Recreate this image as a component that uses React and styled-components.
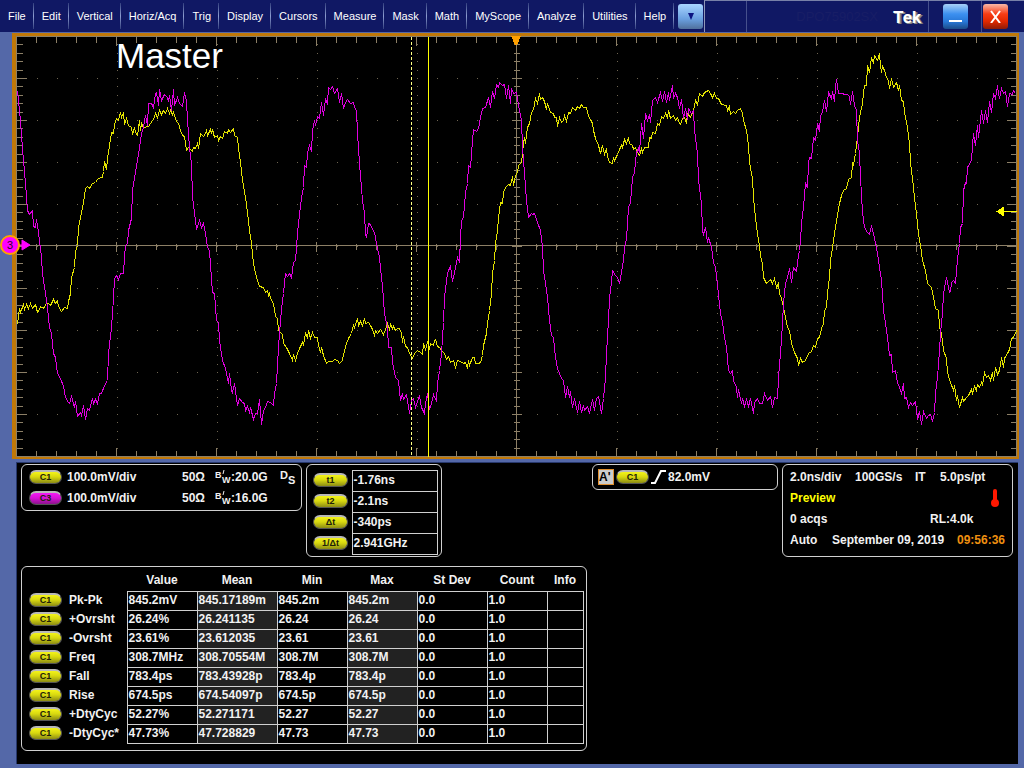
import React from 'react'
import styled, { createGlobalStyle } from 'styled-components';

const GlobalStyle = createGlobalStyle`
  * {
    box-sizing: border-box;
  }
  body {
    margin: 0;
    background: #5468a8;
    color: #f2f2f2;
    font-family: "Liberation Sans", Arial, sans-serif;
    font-size: 12px;
  }
  button {
    font-family: inherit;
    border: 0;
    padding: 0;
    cursor: pointer;
  }
`;

const Page = styled.div`
  display: flex;
  flex-direction: column;
  min-height: 100vh;
`;

const TopBar = styled.header`
  display: flex;
  height: 32px;
  background: #101864;
`;

const Menu = styled.nav`
  display: flex;
  align-items: center;
`;

const MenuItem = styled.button`
  height: 26px;
  padding: 0 7px 0 8px;
  background: none;
  border-right: 1px solid;
  border-image: linear-gradient(#2c3878, #8c9cd0, #2c3878) 1;
  color: #ffffff;
  font-size: 11px;
`;

const BarButton = styled.button`
  display: flex;
  align-items: center;
  justify-content: center;
  width: 25px;
  height: 25px;
  border-radius: 3px;
  background: ${({ $fill }) => $fill};
`;

const MoreButton = styled(BarButton)`
  margin-left: 4px;
`;

const TitleArea = styled.div`
  flex: 1;
  display: flex;
  margin-left: 1px;
  border-top: 1px solid #7880a8;
  border-left: 1px solid #9098b8;
`;

const TitleCell = styled.div`
  display: flex;
  align-items: center;
  justify-content: ${({ $end }) => ($end ? 'flex-end' : 'center')};
  gap: 15px;
  flex: ${({ $grow, $width }) => ($grow ? '1' : `0 0 ${$width}px`)};
  padding-right: ${({ $end }) => ($end ? 7 : 0)}px;
  border-right: ${({ $last }) => ($last ? 0 : 1)}px solid #46508c;
`;

const ModelName = styled.span`
  color: #181e66;
  font-size: 13px;
`;

const Brand = styled.span`
  color: #ffffff;
  font-family: Roboto, sans-serif;
  font-size: 17px;
  font-weight: bold;
  text-shadow: 1px 1px 0 #8c8c8c, 2px 1px 0 #707070;
`;

const Scope = styled.main`
  position: relative;
  margin: 1px 5px 0 12px;
  border: solid #c07808;
  border-width: 3px 2px 2px 4px;
  background: #000000;
`;

const Plot = styled.svg`
  display: block;
  width: 100%;
  height: 421px;
`;

const PlotLabel = styled.div`
  position: absolute;
  left: 100px;
  top: -3px;
  color: #ffffff;
  font-size: 35px;
  line-height: 46px;
`;

const ChannelMarker = styled.svg`
  position: absolute;
  left: -17px;
  top: 198px;
  width: 32px;
  height: 22px;
`;

const Bottom = styled.section`
  flex: 1;
  margin: 3px 6px 4px 16px;
  padding: 1px 5px 0 4px;
  border: solid #28386c;
  border-width: 1px 0 0 1px;
  background: #000000;
`;

const Readouts = styled.div`
  display: flex;
  align-items: flex-start;
  gap: 4px;
`;

const Card = styled.div`
  border: 1px solid #d0d0d0;
  border-radius: 6px;
  font-weight: bold;
`;

const ChannelCard = styled(Card)`
  flex: 0 0 281px;
  padding: 1px 4px 2px 7px;
`;

const ChannelRow = styled.div`
  display: grid;
  grid-template-columns: 38px 115px 33px 65px 1fr;
  align-items: center;
  height: 21px;
`;

const Bandwidth = styled.span`
  display: flex;
  align-items: center;
`;

const CursorCard = styled(Card)`
  flex: 0 0 136px;
  padding: 5px 3px 1px 6px;
`;

const TriggerCard = styled(Card)`
  display: flex;
  align-items: center;
  flex: 0 0 186px;
  height: 26px;
  margin-left: auto;
  padding: 0 5px;
  gap: 2px;
`;

const TriggerBadge = styled.span`
  width: 16px;
  height: 16px;
  border: 1px solid #e09030;
  background: #cccccc;
  color: #000000;
  line-height: 14px;
`;

const TimeCard = styled(Card)`
  flex: 0 0 231px;
  padding: 1px 0 6px 7px;
`;

const TimeRow = styled.div`
  display: grid;
  grid-template-columns: ${({ $columns }) => $columns};
  align-items: center;
  height: 21px;
  white-space: nowrap;
`;

const Preview = styled.span`
  color: #ffff00;
`;

const Clock = styled.span`
  color: #f09010;
`;

const pillColors = {
  yellow: 'linear-gradient(#f4f418, #d8d810 45%, #8c8c14)',
  magenta: 'linear-gradient(#f418f4, #d810d8 45%, #8c148c)',
};

const Pill = styled.button`
  display: block;
  width: ${({ $wide }) => ($wide ? 35 : 33)}px;
  height: 14px;
  border: 1px solid #555555;
  border-top: 2px solid #b8b8b8;
  border-radius: 7px;
  background: ${({ $color = 'yellow' }) => pillColors[$color]};
  color: #202008;
  font-size: 9px;
  font-weight: bold;
  line-height: 11px;
`;

const CursorTable = styled.table`
  width: 100%;
  border-collapse: collapse;
  table-layout: fixed;

  th {
    width: 39px;
    height: 21px;
    padding: 0 0 2px;
  }
  td {
    padding: 0 0 2px 1px;
    border: 1px solid #d0d0d0;
  }
`;

const MeasureCard = styled(Card)`
  width: 566px;
  margin-top: 9px;
  padding: 0 3px 6px 7px;
`;

const MeasureTable = styled.table`
  width: 100%;
  border-collapse: collapse;
  table-layout: fixed;

  th,
  td {
    height: 19px;
    padding: 0 0 2px;
    text-align: left;
    white-space: nowrap;
  }
  thead th {
    height: 24px;
    padding: 3px 0 0;
    text-align: center;
  }
`;

const Cell = styled.td`
  && {
    padding-left: 1px;
  }
  border: 1px solid #d0d0d0;
  background: ${({ $shaded }) => ($shaded ? '#222222' : 'transparent')};
`;

const menuItems = [
  'File', 'Edit', 'Vertical', 'Horiz/Acq', 'Trig', 'Display', 'Cursors',
  'Measure', 'Mask', 'Math', 'MyScope', 'Analyze', 'Utilities', 'Help',
];

const channels = [
  { name: 'C1', color: 'yellow', scale: '100.0mV/div', bandwidth: '20.0G', sampled: true },
  { name: 'C3', color: 'magenta', scale: '100.0mV/div', bandwidth: '16.0G', sampled: false },
];

const cursors = [
  ['t1', '-1.76ns'],
  ['t2', '-2.1ns'],
  ['Δt', '-340ps'],
  ['1/Δt', '2.941GHz'],
];

const columns = ['Value', 'Mean', 'Min', 'Max', 'St Dev', 'Count', 'Info'];
const columnWidths = [40, 58, 70, 80, 70, 70, 70, 60, 36];

const measurements = [
  ['Pk-Pk', '845.2mV', '845.17189m', '845.2m', '845.2m', '0.0', '1.0', ''],
  ['+Ovrsht', '26.24%', '26.241135', '26.24', '26.24', '0.0', '1.0', ''],
  ['-Ovrsht', '23.61%', '23.612035', '23.61', '23.61', '0.0', '1.0', ''],
  ['Freq', '308.7MHz', '308.70554M', '308.7M', '308.7M', '0.0', '1.0', ''],
  ['Fall', '783.4ps', '783.43928p', '783.4p', '783.4p', '0.0', '1.0', ''],
  ['Rise', '674.5ps', '674.54097p', '674.5p', '674.5p', '0.0', '1.0', ''],
  ['+DtyCyc', '52.27%', '52.271171', '52.27', '52.27', '0.0', '1.0', ''],
  ['-DtyCyc*', '47.73%', '47.728829', '47.73', '47.73', '0.0', '1.0', ''],
];

// Plot units: the graticule spans x 16..1016 and y 36..456
const yellowTrace = `17,324 19,308 20,312 23,304 24,309 26,304 28,308 30,303 32,308 35,304 37,312 38,311 40,306 43,308 46,303 48,303
50,305 53,299 55,303 57,300 58,306 61,311 64,307 67,308 68,301 70,293 71,277 74,267 75,251 77,245 78,227 81,212 83,202 85,188
87,186 89,188 92,183 95,182 97,179 100,177 102,177 103,171 104,161 106,169 107,158 109,145 111,132 113,133 114,124 116,118
118,120 120,112 121,117 123,112 124,124 126,118 128,125 131,127 132,134 134,127 135,132 137,135 139,120 140,130 141,123
143,127 148,126 150,123 152,120 153,119 155,113 157,117 159,110 161,114 163,110 165,113 167,108 169,113 170,110 172,114
173,112 176,121 178,123 180,130 182,135 184,136 186,150 188,147 192,151 193,147 195,148 197,143 198,148 200,133 203,136
205,133 206,130 207,135 210,129 211,133 212,129 214,137 217,135 218,140 220,136 222,138 224,131 227,133 228,129 230,132
233,128 234,135 237,137 238,148 240,162 242,180 245,197 247,212 249,230 251,243 253,263 256,277 259,286 263,287 265,292
267,290 268,295 269,293 270,298 273,303 275,316 277,318 278,330 282,334 283,343 286,347 288,351 289,353 292,360 293,354
295,360 297,353 299,348 302,342 303,345 305,333 307,337 308,330 310,338 312,332 314,337 317,337 318,345 320,352 321,347
323,355 326,363 328,361 332,361 334,359 337,360 339,363 342,360 343,354 346,343 348,338 351,333 353,325 354,327 357,318
358,325 360,321 362,325 364,318 365,323 368,322 370,325 372,329 374,335 375,330 377,333 380,329 383,334 385,329 387,323
389,329 390,324 392,328 393,326 395,330 397,328 399,328 401,333 402,342 403,336 405,346 407,347 409,353 412,358 414,353
417,350 420,352 422,354 423,343 425,349 427,342 429,348 430,343 433,345 434,340 435,339 437,346 439,347 442,351 444,353
446,359 448,356 450,362 453,360 455,367 457,360 460,361 463,363 465,362 467,368 468,360 469,365 472,357 474,357 475,363
478,363 480,362 482,355 483,345 486,333 487,323 489,310 491,293 492,273 494,260 495,243 497,230 498,217 500,202 502,203
503,192 505,187 508,184 510,185 512,176 513,185 515,175 517,172 518,165 521,162 522,153 523,143 524,137 525,143 527,127
529,123 531,112 533,109 535,98 537,103 539,93 540,99 542,97 544,101 546,109 547,103 550,112 553,113 554,117 556,117 557,126
559,117 561,122 563,120 564,115 566,121 568,112 570,113 572,107 575,110 577,106 579,108 581,104 583,107 586,107 588,116
590,119 592,123 593,130 595,138 598,145 600,153 602,145 604,154 606,148 607,156 609,162 612,163 613,157 614,160 617,154
619,149 621,145 622,147 624,139 626,143 628,137 629,143 632,145 633,149 635,147 637,152 639,155 641,148 642,152 644,147
646,147 648,147 649,137 651,138 652,132 655,133 657,123 659,125 661,116 663,118 665,113 667,117 668,110 670,118 673,115
675,120 677,117 679,123 680,124 682,118 684,117 686,123 687,113 690,117 693,110 695,100 697,104 699,93 702,96 704,92 708,90
710,93 712,97 714,93 716,98 718,98 721,104 726,105 727,110 729,106 730,114 733,111 735,113 737,110 740,108 742,113 743,120
746,130 748,145 749,162 752,178 753,197 755,217 757,233 759,245 760,256 762,263 763,277 766,283 770,279 772,283 774,278
776,287 778,283 779,293 781,298 783,307 785,317 787,327 789,330 791,343 794,352 797,358 798,365 800,358 802,362 805,360
808,353 811,351 813,345 815,347 817,338 819,337 821,328 823,323 824,310 826,307 827,293 829,277 830,260 832,247 834,233
837,215 839,203 841,195 843,190 846,188 848,179 851,177 852,162 853,165 855,153 857,137 859,117 862,103 863,92 864,85
866,85 867,65 869,72 871,57 873,63 874,55 877,60 879,53 880,65 881,72 882,66 884,70 886,77 888,80 889,88 891,78 893,87
896,82 898,90 899,85 901,100 903,101 904,112 907,127 909,143 910,162 912,178 914,197 916,213 918,233 920,245 922,260
925,270 927,283 931,287 933,297 935,308 938,310 939,327 941,333 943,350 946,358 947,372 950,382 953,390 954,385 956,400
957,395 959,407 962,397 963,401 966,397 968,395 971,389 972,393 974,386 976,390 977,384 979,387 981,382 982,385 984,372
986,377 988,375 990,380 992,372 993,380 995,367 997,374 999,370 1001,357 1003,367 1004,358 1007,353 1009,349 1011,338
1013,337 1016,330`;

const magentaTrace = `17,91 18,100 20,120 22,148 23,160 25,183 27,210 29,214 32,210 33,226 35,227 36,219 37,225 39,240 41,257 42,273
45,293 47,307 49,327 51,333 53,353 55,357 57,373 60,378 63,386 65,397 68,402 69,403 71,396 74,407 75,401 77,416 80,412 81,415
83,405 85,419 87,408 89,410 92,398 93,403 95,399 97,403 99,393 101,393 104,385 107,380 108,353 111,327 113,298 114,278
116,275 118,279 120,273 123,273 124,257 125,245 127,243 128,230 131,218 132,190 134,177 137,160 139,147 141,133 143,127
145,115 147,125 148,103 151,103 153,107 155,93 156,92 158,105 159,89 161,100 164,94 167,97 168,101 169,95 171,110 173,89
174,105 177,97 179,103 182,106 184,92 186,100 187,120 189,147 191,163 192,197 194,212 196,229 199,220 201,227 203,223
205,233 207,247 209,250 212,292 214,293 216,320 218,322 219,340 222,360 225,368 228,383 229,373 231,390 232,392 234,383
237,405 239,398 242,402 244,403 245,410 247,406 249,412 250,407 253,419 255,413 257,413 259,399 261,424 263,410 265,407
267,401 270,402 273,405 274,393 276,383 278,347 279,333 281,308 283,293 285,273 287,276 289,273 291,277 293,262 295,260
296,247 297,233 298,223 301,197 303,187 304,165 306,167 307,152 309,145 311,151 312,130 314,120 315,125 317,116 319,118
321,102 323,115 325,99 327,103 328,87 330,89 332,86 334,93 337,88 339,102 341,93 343,108 344,104 347,99 350,103 353,102
354,107 356,110 357,133 359,163 362,200 364,213 365,233 366,237 368,223 370,224 372,229 374,232 377,248 379,257 381,278
382,285 384,313 387,327 388,347 391,347 392,362 395,377 398,380 400,400 402,393 403,399 406,394 409,413 411,400 413,398
415,407 418,398 419,396 421,407 424,413 425,403 427,393 429,409 431,403 433,394 436,401 437,383 439,370 441,353 443,322
444,297 445,288 447,273 450,265 452,281 454,272 457,257 459,262 460,237 461,220 463,217 465,192 467,183 468,165 470,167
472,140 473,129 476,131 478,128 480,117 482,108 485,107 488,97 490,107 492,91 494,98 496,84 498,87 499,82 502,85 504,84
506,98 508,85 510,103 511,88 513,93 516,92 517,98 519,110 521,120 522,147 524,173 526,200 528,217 531,213 532,214 534,213
537,222 540,230 542,247 543,270 545,283 547,297 549,320 551,335 553,337 555,357 557,368 559,373 561,378 563,380 565,397
567,386 569,397 570,391 572,407 574,398 577,412 579,401 581,412 583,405 584,410 587,406 589,413 592,399 594,410 596,398
598,396 601,413 603,398 605,377 606,353 608,320 609,298 611,282 612,270 615,275 617,277 619,283 621,272 623,260 624,247
626,238 628,207 630,202 632,177 634,172 636,152 638,148 639,152 641,123 643,138 645,113 647,120 649,114 650,122 652,100
655,97 657,102 660,92 662,101 664,91 666,102 668,92 669,100 672,85 673,98 675,93 677,97 679,108 681,99 683,118 685,108
687,119 688,108 691,113 693,110 694,130 697,153 698,180 701,203 702,230 703,234 705,227 707,242 708,237 711,247 713,262
715,267 717,285 720,313 722,322 724,337 726,347 728,370 730,373 732,370 733,380 736,387 737,397 738,389 741,403 742,398
744,406 746,399 748,406 750,398 753,413 754,402 757,398 759,403 762,403 764,393 767,400 770,396 772,407 774,397 777,398
778,377 780,353 782,323 783,303 785,283 787,277 789,268 791,282 793,267 796,271 797,262 799,250 800,240 801,223 803,207
805,183 807,187 808,163 809,157 811,158 813,137 815,140 817,123 819,131 820,115 822,112 824,100 826,111 828,92 831,98
832,91 834,101 835,87 836,79 838,93 842,93 844,94 847,94 849,96 850,104 852,91 854,105 856,110 857,140 859,153 860,177
862,212 864,227 867,232 869,234 871,226 873,233 875,243 877,253 878,260 881,280 883,310 885,323 887,337 889,355 891,354
892,372 895,370 897,382 899,387 901,393 903,383 904,398 906,397 908,407 910,402 912,405 915,401 917,419 919,411 921,424
923,411 926,418 928,415 930,414 932,421 934,412 935,393 937,377 939,350 940,333 942,313 943,293 945,282 946,277 949,292
950,291 951,282 953,280 955,283 957,258 959,243 960,227 962,223 963,190 965,182 966,183 967,167 971,160 972,145 973,133
975,145 977,125 978,137 981,110 983,123 985,110 987,122 989,101 991,112 993,93 995,98 997,85 998,93 999,98 1001,88 1003,93
1005,91 1007,106 1009,93 1012,94 1013,90 1015,93`;

const buildTicks = () => {
  let path = '';
  for (let i = 1; i < 50; i++) {
    const x = 16 + i * 20;
    const major = i % 5 === 0;
    const edge = major ? 9 : 6;
    path += `M${x} 36v${edge}M${x} 456v-${edge}`;
    path += `M${x} ${major ? 241 : 243}v${major ? 10 : 6}`;

    const y = Math.round(36 + i * 8.4);
    const side = major ? 10 : 6;
    path += `M16 ${y}h${side}M1016 ${y}h-${side}`;
    path += `M${major ? 511 : 513} ${y}h${major ? 10 : 6}`;
  }
  return path;
}

const buildDots = () => {
  let path = '';
  for (let i = 1; i < 50; i++) {
    for (let j = 1; j < 10; j++) {
      path += `M${16 + i * 20} ${36 + j * 42}h1`;
      path += `M${16 + j * 100} ${Math.round(36 + i * 8.4)}h1`;
    }
  }
  return path;
}

const Waveforms = () => (
  <Plot viewBox="16 36 1001 421" preserveAspectRatio="none" shapeRendering="crispEdges" fill="none" role="img" aria-label="Waveforms">
    <g transform="translate(0.5 0.5)">
      <path d={buildDots()} stroke="#6e6450" />
      <path d={buildTicks()} stroke="#8c7f66" />
      <path d="M16 36H1016V456H16Z" stroke="#8c7f66" />
      <path d="M16 245H1016M516 36V456" stroke="#8c7f66" />
      <polyline points={yellowTrace} stroke="#e4e400" />
      <polyline points={magentaTrace} stroke="#e000e0" />
      <path d="M411 36V456" stroke="#ffff80" strokeDasharray="3 2" />
      <path d="M428 36V456" stroke="#ffff00" />
      <path d="M1003 211H1016" stroke="#ffff00" />
    </g>
    <path d="M511 36h10l-4 9h-2z" fill="#ffa000" />
    <path d="M996 211.500l8-5v10z" fill="#ffff00" />
  </Plot>
)

const BandwidthIcon = () => (
  <svg width="16" height="16" viewBox="0 0 16 16" fontFamily="Liberation Sans" fontWeight="bold" fill="#f2f2f2" aria-hidden="true">
    <text x="0" y="9" fontSize="9">B</text>
    <text x="7" y="14" fontSize="9">W</text>
    <path d="M9 1l-1 4" stroke="#f2f2f2" />
  </svg>
)

const SampleIcon = () => (
  <svg width="16" height="18" viewBox="0 0 16 18" fontFamily="Liberation Sans" fontWeight="bold" fill="#f2f2f2" aria-hidden="true">
    <text x="0" y="11" fontSize="11">D</text>
    <text x="8" y="16" fontSize="11">S</text>
  </svg>
)

const App = () => {
  return (
    <>
      <GlobalStyle />
      <Page>
        <TopBar>
          <Menu>
            {menuItems.map((item) => (
              <MenuItem key={item}>{item}</MenuItem>
            ))}
            <MoreButton $fill="linear-gradient(#a8d4ff, #6aa0e0 60%, #50709c)" aria-label="More menus">
              <svg width="8" height="9" viewBox="0 0 8 9">
                <path d="M1 1h6L4 8z" fill="#0c1480" />
              </svg>
            </MoreButton>
          </Menu>
          <TitleArea>
            <TitleCell $width={42} />
            <TitleCell $grow $end>
              <ModelName>DPO75902SX</ModelName>
              <Brand>Tek</Brand>
            </TitleCell>
            <TitleCell $width={53}>
              <BarButton $fill="linear-gradient(#a8d0f8, #3c90f0 40%, #2878d8 70%, #1c4c88)" aria-label="Minimize">
                <svg width="13" height="13" viewBox="0 0 13 13">
                  <path d="M0 10h13v2H0z" fill="#ffffff" />
                </svg>
              </BarButton>
            </TitleCell>
            <TitleCell $width={26} $last>
              <BarButton $fill="linear-gradient(#f8b8a8, #f83c14 40%, #e02800 70%, #8c1c08)" aria-label="Close">
                <svg width="11" height="13" viewBox="0 0 11 13">
                  <path d="M1 1l9 12M10 1L1 13" stroke="#ffffff" strokeWidth="2" />
                </svg>
              </BarButton>
            </TitleCell>
            <TitleCell $width={16} $last />
          </TitleArea>
        </TopBar>

        <Scope>
          <Waveforms />
          <PlotLabel>Master</PlotLabel>
          <ChannelMarker viewBox="0 0 32 22" aria-hidden="true">
            <path d="M18 11h6M23 6l8 5-8 5z" fill="#ff00ff" stroke="#ff00ff" strokeWidth="1" />
            <circle cx="11" cy="11" r="9" fill="#ff00ff" stroke="#ffa000" strokeWidth="2" />
            <text x="11" y="15" textAnchor="middle" fontFamily="Liberation Sans" fontSize="11" fill="#300030">3</text>
          </ChannelMarker>
        </Scope>

        <Bottom>
          <Readouts>
            <ChannelCard>
              {channels.map((channel) => (
                <ChannelRow key={channel.name}>
                  <Pill $color={channel.color}>{channel.name}</Pill>
                  <span>{channel.scale}</span>
                  <span>50Ω</span>
                  <Bandwidth><BandwidthIcon />:{channel.bandwidth}</Bandwidth>
                  {channel.sampled && <SampleIcon />}
                </ChannelRow>
              ))}
            </ChannelCard>

            <CursorCard>
              <CursorTable>
                <tbody>
                  {cursors.map(([name, value]) => (
                    <tr key={name}>
                      <th scope="row"><Pill $wide>{name}</Pill></th>
                      <td>{value}</td>
                    </tr>
                  ))}
                </tbody>
              </CursorTable>
            </CursorCard>

            <TriggerCard>
              <TriggerBadge>A'</TriggerBadge>
              <Pill>C1</Pill>
              <svg width="15" height="14" viewBox="0 0 15 14" fill="none" aria-label="Rising edge">
                <path d="M0 13h4L10 1h5" stroke="#ffffff" strokeWidth="2" />
              </svg>
              <span>82.0mV</span>
            </TriggerCard>

            <TimeCard>
              <TimeRow $columns="65px 60px 25px 1fr">
                <span>2.0ns/div</span>
                <span>100GS/s</span>
                <span>IT</span>
                <span>5.0ps/pt</span>
              </TimeRow>
              <TimeRow $columns="1fr 21px">
                <Preview>Preview</Preview>
                <svg width="8" height="18" viewBox="0 0 8 18" aria-label="Temperature">
                  <path d="M4 2v12" stroke="#ff1800" strokeWidth="4" strokeLinecap="round" />
                  <circle cx="4" cy="14" r="4" fill="#ff1800" />
                </svg>
              </TimeRow>
              <TimeRow $columns="140px 1fr">
                <span>0 acqs</span>
                <span>RL:4.0k</span>
              </TimeRow>
              <TimeRow $columns="42px 125px 1fr">
                <span>Auto</span>
                <span>September 09, 2019</span>
                <Clock>09:56:36</Clock>
              </TimeRow>
            </TimeCard>
          </Readouts>

          <MeasureCard>
            <MeasureTable>
              <colgroup>
                {columnWidths.map((width, i) => (
                  <col key={i} width={width} />
                ))}
              </colgroup>
              <thead>
                <tr>
                  <th colSpan={2} />
                  {columns.map((column) => (
                    <th key={column} scope="col">{column}</th>
                  ))}
                </tr>
              </thead>
              <tbody>
                {measurements.map(([name, ...values]) => (
                  <tr key={name}>
                    <td><Pill>C1</Pill></td>
                    <th scope="row">{name}</th>
                    {values.map((value, i) => (
                      <Cell key={i} $shaded={i === 1 || i === 3}>{value}</Cell>
                    ))}
                  </tr>
                ))}
              </tbody>
            </MeasureTable>
          </MeasureCard>
        </Bottom>
      </Page>
    </>
  );
}

export default App
